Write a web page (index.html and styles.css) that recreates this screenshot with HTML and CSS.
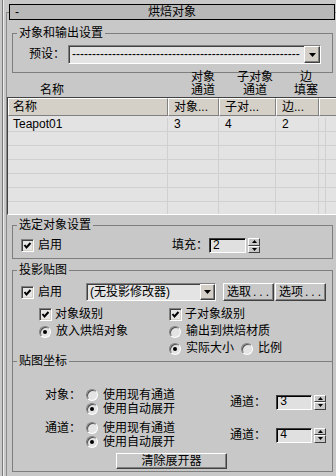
FILE: index.html
```html
<!DOCTYPE html>
<html lang="zh-CN">
<head>
    <meta charset="UTF-8">
    <meta name="viewport" content="width=device-width, initial-scale=1.0">
    <title>烘焙对象</title>
    <link rel="stylesheet" href="styles.css">
</head>
<body>
<div class="panel">
    <div class="edge"></div>
    <div class="rollout">
        <div class="rollout-title">
            <span class="minus">-</span>
            <span class="title-text">烘焙对象</span>
        </div>

        <!-- 对象和输出设置 -->
        <div class="group g-output">
            <div class="group-title">对象和输出设置</div>
            <div class="preset-row">
                <span class="preset-label">预设：</span>
                <div class="combo combo-preset">
                    <span class="combo-text">---------------------------------------------------------</span>
                    <span class="combo-btn"><svg width="7" height="4"><polygon points="0,0 7,0 3.5,4"/></svg></span>
                </div>
            </div>
        </div>

        <div class="col-labels">
            <span class="cl cl-name">名称</span>
            <span class="cl cl-obj">对象<br>通道</span>
            <span class="cl cl-sub">子对象<br>通道</span>
            <span class="cl cl-pad">边<br>填塞</span>
        </div>

        <div class="list">
            <div class="list-head">
                <div class="hc c1">名称</div>
                <div class="hc c2">对象...</div>
                <div class="hc c3">子对...</div>
                <div class="hc c4">边...</div>
                <div class="hc c5"></div>
            </div>
            <div class="list-body">
                <div class="row"><div class="cell c1">Teapot01</div><div class="cell c2">3</div><div class="cell c3">4</div><div class="cell c4">2</div><div class="cell c5"></div></div>
                <div class="row"><div class="cell c1"></div><div class="cell c2"></div><div class="cell c3"></div><div class="cell c4"></div><div class="cell c5"></div></div>
                <div class="row"><div class="cell c1"></div><div class="cell c2"></div><div class="cell c3"></div><div class="cell c4"></div><div class="cell c5"></div></div>
                <div class="row"><div class="cell c1"></div><div class="cell c2"></div><div class="cell c3"></div><div class="cell c4"></div><div class="cell c5"></div></div>
                <div class="row"><div class="cell c1"></div><div class="cell c2"></div><div class="cell c3"></div><div class="cell c4"></div><div class="cell c5"></div></div>
                <div class="row"><div class="cell c1"></div><div class="cell c2"></div><div class="cell c3"></div><div class="cell c4"></div><div class="cell c5"></div></div>
                <div class="row"><div class="cell c1"></div><div class="cell c2"></div><div class="cell c3"></div><div class="cell c4"></div><div class="cell c5"></div></div>
            </div>
        </div>

        <!-- 选定对象设置 -->
        <div class="group g-select">
            <div class="group-title">选定对象设置</div>
            <div class="sel-row">
                <span class="check"><svg width="9" height="9"><polyline points="1.5,4 3.5,6.5 7.5,2"/></svg></span>
                <span class="opt-text">启用</span>
                <span class="fill-label">填充：</span>
                <div class="spin">
                    <span class="spin-field">2</span>
                    <span class="spin-arrows">
                        <span><svg width="5" height="3"><polygon points="2.5,0 5,3 0,3"/></svg></span>
                        <span><svg width="5" height="3"><polygon points="0,0 5,0 2.5,3"/></svg></span>
                    </span>
                </div>
            </div>
        </div>

        <!-- 投影贴图 -->
        <div class="group g-proj">
            <div class="group-title">投影贴图</div>
            <div class="proj-row">
                <span class="check"><svg width="9" height="9"><polyline points="1.5,4 3.5,6.5 7.5,2"/></svg></span>
                <span class="opt-text">启用</span>
                <div class="combo combo-proj">
                    <span class="combo-text">(无投影修改器)</span>
                    <span class="combo-btn"><svg width="7" height="4"><polygon points="0,0 7,0 3.5,4"/></svg></span>
                </div>
                <span class="btn btn-pick">选取<span class="dots">...</span></span>
                <span class="btn btn-opts">选项<span class="dots">...</span></span>
            </div>
            <div class="proj-grid">
                <div class="opt"><span class="check"><svg width="9" height="9"><polyline points="1.5,4 3.5,6.5 7.5,2"/></svg></span><span class="label-gap">对象级别</span></div>
                <div class="opt"><span class="check"><svg width="9" height="9"><polyline points="1.5,4 3.5,6.5 7.5,2"/></svg></span><span class="label-gap">子对象级别</span></div>
                <div class="opt"><span class="radio on"></span><span class="label-gap-r">放入烘焙对象</span></div>
                <div class="opt"><span class="radio"></span><span class="label-gap-r">输出到烘焙材质</span></div>
                <div class="opt"></div>
                <div class="opt"><span class="radio on"></span><span class="label-gap-r">实际大小</span><span class="radio ratio"></span><span class="label-gap-r">比例</span></div>
            </div>
        </div>

        <!-- 贴图坐标 -->
        <div class="group g-uv">
            <div class="group-title">贴图坐标</div>
            <div class="uv-block first">
                <span class="uv-label">对象：</span>
                <div class="uv-radios">
                    <div class="opt"><span class="radio"></span><span class="label-gap-r">使用现有通道</span></div>
                    <div class="opt"><span class="radio on"></span><span class="label-gap-r">使用自动展开</span></div>
                </div>
                <span class="ch-label">通道：</span>
                <div class="spin">
                    <span class="spin-field mono">3</span>
                    <span class="spin-arrows">
                        <span><svg width="5" height="3"><polygon points="2.5,0 5,3 0,3"/></svg></span>
                        <span><svg width="5" height="3"><polygon points="0,0 5,0 2.5,3"/></svg></span>
                    </span>
                </div>
            </div>
            <div class="uv-block">
                <span class="uv-label">通道：</span>
                <div class="uv-radios">
                    <div class="opt"><span class="radio"></span><span class="label-gap-r">使用现有通道</span></div>
                    <div class="opt"><span class="radio on"></span><span class="label-gap-r">使用自动展开</span></div>
                </div>
                <span class="ch-label">通道：</span>
                <div class="spin">
                    <span class="spin-field mono">4</span>
                    <span class="spin-arrows">
                        <span><svg width="5" height="3"><polygon points="2.5,0 5,3 0,3"/></svg></span>
                        <span><svg width="5" height="3"><polygon points="0,0 5,0 2.5,3"/></svg></span>
                    </span>
                </div>
            </div>
            <div class="btn clear-btn">清除展开器</div>
        </div>
    </div>
</div>
</body>
</html>
```

FILE: styles.css
```css
body {
    margin: 0;
    width: 336px;
    height: 476px;
    overflow: hidden;
    background: #c8c8c8;
    font-family: "Liberation Sans", "Noto Sans CJK SC", sans-serif;
    font-size: 12px;
    line-height: 13px;
    color: #000;
}

.panel {
    display: flex;
    height: 476px;
}

.edge {
    flex: none;
    width: 6px;
    background: linear-gradient(to right, #c8c8c8 0 2px, #7a7a7a 2px 3px, #ececec 3px 4px, #c8c8c8 4px 6px);
}

.rollout {
    flex: none;
    width: 340px;
    margin-top: 12px;
    border-top: 1px solid #8a8a8a;
    border-left: 1px solid #8a8a8a;
}

.rollout-title {
    margin: -9px 0 0 2px;
    width: 326px;
    height: 16px;
    box-sizing: border-box;
    border: 1px solid #000;
    background: #b8b8b8;
    display: grid;
    grid-template-columns: 1fr auto 1fr;
    align-items: center;
    line-height: 14px;
}

.minus {
    padding-left: 5px;
}

/* group boxes */
.group {
    margin-left: 5px;
    width: 321px;
    box-sizing: border-box;
    border: 1px solid #7e7e7e;
}

.group-title {
    width: fit-content;
    margin: -7px 0 0 4px;
    padding: 0 2px;
    background: #c8c8c8;
    line-height: 13px;
}

.g-output {
    margin-top: 13px;
    padding-bottom: 8px;
}

.preset-row {
    display: flex;
    align-items: center;
    margin-top: 5px;
    padding-left: 16px;
}

.preset-label {
    width: 39px;
}

/* combo boxes */
.combo {
    display: flex;
    box-sizing: border-box;
    border: 1px solid;
    border-color: #808080 #fff #fff #808080;
    box-shadow: inset 1px 1px 0 #404040;
    background: #e4e4e4;
}

.combo-preset {
    width: 253px;
    height: 19px;
}

.combo-proj {
    width: 130px;
    height: 18px;
    margin-left: 24px;
}

.combo-text {
    flex: 1;
    white-space: nowrap;
    padding-left: 3px;
    align-self: center;
}

.combo-btn {
    flex: none;
    width: 16px;
    box-sizing: border-box;
    border: 1px solid;
    border-color: #fff #404040 #404040 #fff;
    box-shadow: inset -1px -1px 0 #808080;
    background: #d4d0c8;
    display: flex;
    align-items: center;
    justify-content: center;
}

.combo-proj .combo-btn {
    width: 15px;
}

/* list column captions */
.col-labels {
    display: flex;
    align-items: flex-end;
    height: 26px;
    margin-top: -2px;
    padding-left: 33px;
    line-height: 13px;
}

.cl {
    text-align: center;
}

.cl-name { width: 24px; }
.cl-obj { width: 26px; margin-left: 126px; }
.cl-sub { width: 36px; margin-left: 21px; }
.cl-pad { width: 24px; margin-left: 21px; }

/* list */
.list {
    border-top: 1px solid #404040;
    border-left: 1px solid #404040;
    border-bottom: 1px solid #fff;
}

.list-head {
    display: flex;
    height: 18px;
}

.hc {
    flex: none;
    box-sizing: border-box;
    border: 1px solid;
    border-color: #fff #808080 #808080 #fff;
    background: #d4d0c8;
    padding-left: 5px;
    line-height: 16px;
}

.c1 { width: 160px; }
.c2 { width: 51px; }
.c3 { width: 57px; }
.c4 { width: 43px; }
.c5 { flex: 1; }
.hc.c1 { padding-left: 4px; }

.list-body {
    height: 98px;
    box-sizing: border-box;
    padding-top: 2px;
    overflow: hidden;
    background: #e3e3e3;
}

.row {
    display: flex;
    height: 14px;
    box-sizing: border-box;
    border-bottom: 1px solid #d0d0d0;
}

.cell {
    flex: none;
    box-sizing: border-box;
    border-right: 1px solid #d0d0d0;
    padding-left: 6px;
    line-height: 13px;
}

.cell.c1 {
    padding-left: 5px;
}

/* check boxes and radios */
.check {
    flex: none;
    width: 13px;
    height: 13px;
    box-sizing: border-box;
    border: 1px solid;
    border-color: #808080 #fff #fff #808080;
    box-shadow: inset 1px 1px 0 #404040, inset -1px -1px 0 #d4d0c8;
    background: #e6e6e6;
    display: flex;
    align-items: center;
    justify-content: center;
}

.check polyline {
    fill: none;
    stroke: #000;
    stroke-width: 2;
}

.radio {
    flex: none;
    width: 12px;
    height: 12px;
    box-sizing: border-box;
    border-radius: 50%;
    border: 1px solid;
    border-color: #808080 #fff #fff #808080;
    box-shadow: inset 1px 1px 0 #505050;
    background: #e4e4e4;
    display: flex;
    align-items: center;
    justify-content: center;
}

.radio.on::after {
    content: "";
    width: 4px;
    height: 4px;
    border-radius: 50%;
    background: #000;
}

.opt-text {
    margin-left: 4px;
}

.label-gap {
    margin-left: 3px;
}

.label-gap-r {
    margin-left: 5px;
}

/* 选定对象设置 */
.g-select {
    margin-top: 10px;
    padding-bottom: 5px;
}

.sel-row {
    display: flex;
    align-items: center;
    height: 15px;
    margin-top: 6px;
    padding-left: 8px;
}

.fill-label {
    margin-left: 110px;
}

/* spinners */
.spin {
    display: flex;
    align-items: center;
    gap: 2px;
    margin-left: 1px;
}

.spin-field {
    width: 37px;
    height: 15px;
    box-sizing: border-box;
    border: 1px solid;
    border-color: #404040 #fff #fff #404040;
    box-shadow: inset 1px 1px 0 #000;
    background: #e0e0e0;
    padding-left: 3px;
    line-height: 13px;
}

.spin-field.mono {
    width: 36px;
    font-family: "Liberation Mono", monospace;
}

.spin-arrows {
    display: flex;
    flex-direction: column;
    width: 12px;
    height: 15px;
}

.spin-arrows span {
    flex: 1;
    display: flex;
    align-items: center;
    justify-content: center;
    box-sizing: border-box;
    border: 1px solid;
    border-color: #fff #404040 #404040 #fff;
    background: #c8c8c8;
}

/* buttons */
.btn {
    box-sizing: border-box;
    border: 1px solid;
    border-color: #fff #404040 #404040 #fff;
    box-shadow: inset -1px -1px 0 #808080;
    background: #c8c8c8;
}

.btn-pick,
.btn-opts {
    width: 51px;
    height: 18px;
    padding-left: 3px;
    line-height: 16px;
    white-space: nowrap;
}

.btn-pick {
    margin-left: 7px;
}

.btn-opts {
    margin-left: 1px;
}

.dots {
    letter-spacing: 3px;
    margin-left: 2px;
}

/* 投影贴图 */
.g-proj {
    margin-top: 11px;
    border-bottom: none;
    padding-bottom: 4px;
}

.proj-row {
    display: flex;
    align-items: center;
    height: 18px;
    margin-top: 6px;
    padding-left: 8px;
}

.proj-grid {
    display: grid;
    grid-template-columns: 130px 1fr;
    grid-auto-rows: 17px;
    margin-top: 5px;
    padding-left: 26px;
}

.opt {
    display: flex;
    align-items: center;
    white-space: nowrap;
}

.ratio {
    margin-left: 7px;
}

/* 贴图坐标 */
.g-uv {
    padding-bottom: 2px;
}

.uv-block {
    display: flex;
    align-items: center;
    margin-top: 5px;
    padding-left: 32px;
}

.uv-block.first {
    margin-top: 20px;
}

.uv-label {
    align-self: flex-start;
    width: 41px;
    line-height: 14px;
}

.uv-radios {
    width: 144px;
}

.uv-radios .opt {
    height: 14px;
}

.ch-label {
    width: 45px;
}

.clear-btn {
    width: 111px;
    height: 16px;
    margin: 4px 0 0 103px;
    text-align: center;
    line-height: 14px;
}
```
